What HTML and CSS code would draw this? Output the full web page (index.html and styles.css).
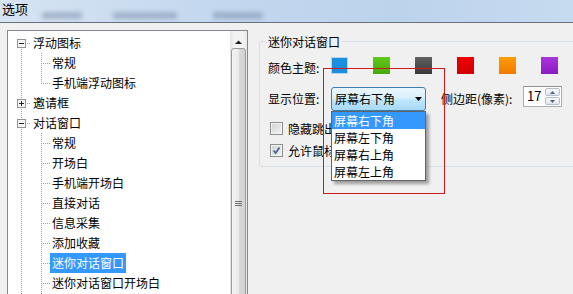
FILE: index.html
```html
<!DOCTYPE html>
<html lang="zh-CN">
<head>
<meta charset="utf-8">
<title>选项</title>
<link rel="stylesheet" href="styles.css">
</head>
<body>
<div class="window">
  <div class="titlebar">
    <span class="title">选项</span>
    <span class="blob b1"></span>
    <span class="blob b2"></span>
    <span class="blob b3"></span>
  </div>
  <div class="content">
    <div class="tree">
      <div class="nodes">
        <div class="node"><span class="c r-first"><svg class="exp" width="9" height="9" viewBox="0 0 9 9"><rect x="0.5" y="0.5" width="8" height="8" fill="#f6f6f6" stroke="#939393"/><path d="M2 4.5h5" stroke="#222"/></svg></span><span class="txt">浮动图标</span></div>
        <div class="node"><span class="c r-v"></span><span class="c c-t"></span><span class="txt">常规</span></div>
        <div class="node"><span class="c r-v"></span><span class="c c-l"></span><span class="txt">手机端浮动图标</span></div>
        <div class="node"><span class="c r-t"><svg class="exp" width="9" height="9" viewBox="0 0 9 9"><rect x="0.5" y="0.5" width="8" height="8" fill="#f6f6f6" stroke="#939393"/><path d="M2 4.5h5M4.5 2v5" stroke="#222"/></svg></span><span class="txt">邀请框</span></div>
        <div class="node"><span class="c r-t"><svg class="exp" width="9" height="9" viewBox="0 0 9 9"><rect x="0.5" y="0.5" width="8" height="8" fill="#f6f6f6" stroke="#939393"/><path d="M2 4.5h5" stroke="#222"/></svg></span><span class="txt">对话窗口</span></div>
        <div class="node"><span class="c r-v"></span><span class="c c-t"></span><span class="txt">常规</span></div>
        <div class="node"><span class="c r-v"></span><span class="c c-t"></span><span class="txt">开场白</span></div>
        <div class="node"><span class="c r-v"></span><span class="c c-t"></span><span class="txt">手机端开场白</span></div>
        <div class="node"><span class="c r-v"></span><span class="c c-t"></span><span class="txt">直接对话</span></div>
        <div class="node"><span class="c r-v"></span><span class="c c-t"></span><span class="txt">信息采集</span></div>
        <div class="node"><span class="c r-v"></span><span class="c c-t"></span><span class="txt">添加收藏</span></div>
        <div class="node"><span class="c r-v"></span><span class="c c-t"></span><span class="txt sel">迷你对话窗口</span></div>
        <div class="node"><span class="c r-v"></span><span class="c c-t"></span><span class="txt">迷你对话窗口开场白</span></div>
        <div class="node"><span class="c r-v"></span><span class="c c-t"></span></div>
      </div>
      <div class="scrollbar">
        <div class="sb-up"><svg width="7" height="4" viewBox="0 0 7 4"><path d="M0 4L3.5 0.5L7 4z" fill="#1e1e1e"/></svg></div>
        <div class="sb-thumb"><svg class="grip" width="7" height="6" viewBox="0 0 7 6"><path d="M0 0.5h7M0 2.5h7M0 4.5h7" stroke="#6e6e6e"/></svg></div>
      </div>
    </div>
    <div class="panel">
      <fieldset class="group">
        <legend>迷你对话窗口</legend>
        <div class="row colors">
          <span class="lbl">颜色主题:</span>
          <div class="swatches">
            <span class="sw sw-blue"></span>
            <span class="sw sw-green"></span>
            <span class="sw sw-grey"></span>
            <span class="sw sw-red"></span>
            <span class="sw sw-orange"></span>
            <span class="sw sw-purple"></span>
          </div>
        </div>
        <div class="row pos">
          <span class="lbl">显示位置:</span>
          <div class="combo">
            <span class="combo-val">屏幕右下角</span>
            <svg class="combo-arrow" width="7" height="4" viewBox="0 0 7 4"><path d="M0 0h7L3.5 4z" fill="#000"/></svg>
          </div>
          <span class="lbl2">侧边距(像素):</span>
          <div class="spin">
            <span class="spin-val">17</span>
            <div class="spin-btns">
              <span class="sbtn"><svg width="5" height="3" viewBox="0 0 5 3"><path d="M0 3L2.5 0L5 3z" fill="#4d6185"/></svg></span>
              <span class="sbtn"><svg width="5" height="3" viewBox="0 0 5 3"><path d="M0 0h5L2.5 3z" fill="#4d6185"/></svg></span>
            </div>
          </div>
        </div>
        <div class="checks">
          <label class="check"><span class="cb"></span><span class="check-txt">隐藏跳出</span></label>
          <label class="check"><span class="cb checked"><svg width="9" height="9" viewBox="0 0 9 9"><path d="M1.5 4.5L3.6 7L7.5 1.5" fill="none" stroke="#4a5e95" stroke-width="1.7"/></svg></span><span class="check-txt">允许鼠标</span></label>
        </div>
      </fieldset>
    </div>
  </div>
  <ul class="dropdown">
    <li class="hl">屏幕右下角</li>
    <li>屏幕左下角</li>
    <li>屏幕右上角</li>
    <li>屏幕左上角</li>
  </ul>
  <div class="annot"></div>
</div>
</body>
</html>
```

FILE: styles.css
```css
* { box-sizing: border-box; }

body {
  margin: 0;
  font-family: "Noto Sans CJK SC", "Microsoft YaHei", sans-serif;
  font-size: 12px;
  color: #000;
  background: #f0f0f0;
}

.window {
  position: relative;
  width: 573px;
  height: 294px;
  overflow: hidden;
  background: #f0f0f0;
  --v: repeating-linear-gradient(to bottom, #a0a0a0 0 1px, transparent 1px 2px);
  --h: repeating-linear-gradient(to right, #a0a0a0 0 1px, transparent 1px 2px);
}

/* title bar */
.titlebar {
  height: 23px;
  display: flex;
  align-items: flex-start;
  background: linear-gradient(to right, #d6e4f3 0%, #c4d8ee 35%, #bcd3ec 70%, #c7dbef 100%);
  border-bottom: 1px solid #66717e;
}
.title {
  font-size: 13px;
  line-height: 18px;
  padding-left: 2px;
  width: 28px;
}
.blob {
  height: 7px;
  margin-top: 12px;
  background: rgba(110, 130, 160, 0.45);
  filter: blur(2px);
  border-radius: 2px;
}
.b1 { width: 40px; margin-left: 14px; }
.b2 { width: 64px; margin-left: 31px; }
.b3 { width: 50px; margin-left: 36px; }

/* layout */
.content {
  display: flex;
  padding: 7px 0 0 7px;
}

/* tree */
.tree {
  flex: none;
  display: flex;
  width: 241px;
  height: 300px;
  border: 1px solid #828790;
  background: #fff;
}
.nodes {
  flex: 1;
  padding: 2px 0 0 3px;
}
.node {
  display: flex;
  height: 20px;
}
.c {
  flex: none;
  width: 20px;
  height: 20px;
  display: flex;
  align-items: flex-start;
  padding: 6px 0 0 6px;
  background-repeat: no-repeat;
}
.exp { display: block; }
.c-t, .c-l { width: 19px; }
.r-first {
  background-image: var(--v), var(--h);
  background-size: 1px 10px, 10px 1px;
  background-position: 10px 10px, 10px 10px;
}
.r-v {
  background-image: var(--v);
  background-size: 1px 20px;
  background-position: 10px 0;
}
.r-t {
  background-image: var(--v), var(--h);
  background-size: 1px 20px, 10px 1px;
  background-position: 10px 0, 10px 10px;
}
.c-t {
  background-image: var(--v), var(--h);
  background-size: 1px 20px, 9px 1px;
  background-position: 10px 0, 10px 10px;
}
.c-l {
  background-image: var(--v), var(--h);
  background-size: 1px 10px, 9px 1px;
  background-position: 10px 0, 10px 10px;
}
.txt {
  line-height: 20px;
  height: 20px;
  padding: 0 2px;
  white-space: nowrap;
}
.txt.sel {
  background: #3399ff;
  color: #fff;
}

/* scrollbar */
.scrollbar {
  flex: none;
  width: 17px;
  display: flex;
  flex-direction: column;
  background: linear-gradient(to right, #e4e4e4 0%, #f3f3f3 25%, #f3f3f3 75%, #e9e9e9 100%);
}
.sb-up {
  height: 17px;
  display: flex;
  justify-content: center;
  padding-top: 9px;
}
.sb-up svg { display: block; }
.sb-thumb {
  margin: 2px 1px 0 1px;
  height: 320px;
  border: 1px solid #9a9a9a;
  border-radius: 3px;
  background: linear-gradient(to right, #f4f4f4 0%, #eaeaea 50%, #d9d9d9 51%, #d2d2d2 100%);
  display: flex;
  justify-content: center;
  padding-top: 152px;
}
.grip { display: block; }

/* right panel */
.panel {
  padding: 3px 0 0 11px;
}
.group {
  margin: 0;
  width: 330px;
  min-width: 0;
  padding: 0 0 5px 8px;
  border: 1px solid #d5dfe5;
  border-radius: 3px;
}
.group legend {
  padding: 0 2px;
  margin-left: -2px;
  line-height: 17px;
}
.row { display: flex; }
.lbl {
  flex: none;
  width: 63px;
  white-space: nowrap;
}
.colors {
  margin-top: 7px;
  height: 17px;
  align-items: flex-start;
}
.colors .lbl {
  line-height: 17px;
  margin-top: 2px;
}
.swatches {
  display: flex;
  gap: 25px;
}
.sw {
  width: 17px;
  height: 17px;
}
.sw-blue { background: #1a8fe0; border: 1px solid #bcd4e8; }
.sw-green { background: linear-gradient(#62c91c, #45a809); }
.sw-grey { background: linear-gradient(#626262, #383838); }
.sw-red { background: linear-gradient(#ee0000, #d40000); }
.sw-orange { background: linear-gradient(#ff9d00, #f07a00); }
.sw-purple { background: linear-gradient(#ab35dc, #8a1cc2); }

.pos {
  margin-top: 12px;
  height: 25px;
  align-items: flex-start;
}
.pos .lbl { line-height: 25px; }
.combo {
  flex: none;
  width: 95px;
  height: 24px;
  margin-top: 1px;
  border: 1px solid #3c7fb1;
  border-radius: 3px;
  background: linear-gradient(to bottom, #eaf6fd 0%, #d9f0fc 45%, #bee6fd 55%, #a7d9f5 100%);
  display: flex;
  align-items: center;
  padding: 0 3px 0 3px;
}
.combo-val {
  flex: 1;
  line-height: 22px;
}
.combo-arrow { display: block; }
.lbl2 {
  flex: none;
  width: 82px;
  margin-left: 15px;
  line-height: 25px;
  white-space: nowrap;
}
.spin {
  flex: none;
  display: flex;
  width: 39px;
  height: 21px;
  border: 1px solid #abadb3;
  border-top-color: #8e8f8f;
  background: #fff;
}
.spin-val {
  flex: 1;
  font-size: 13px;
  line-height: 18px;
  padding-left: 3px;
}
.spin-btns {
  flex: none;
  width: 15px;
  display: flex;
  flex-direction: column;
  gap: 1px;
  margin: 1px 1px 1px 0;
}
.sbtn {
  flex: 1;
  border: 1px solid #b5bfca;
  border-radius: 2px;
  background: linear-gradient(#f7f8fa, #e3e8ee);
  display: flex;
  align-items: center;
  justify-content: center;
}
.sbtn svg { display: block; }

.checks {
  margin-top: 6px;
}
.check {
  display: flex;
  align-items: center;
  height: 22px;
  padding-left: 2px;
  white-space: nowrap;
}
.check-txt {
  display: block;
  width: 43px;
  overflow: hidden;
  white-space: nowrap;
}
.cb {
  flex: none;
  width: 13px;
  height: 13px;
  margin-right: 5px;
  border: 1px solid #8f8f8f;
  box-shadow: inset 0 0 0 1px #f4f4f4;
  background: linear-gradient(135deg, #cdd0d4, #f7f7f7);
  display: flex;
  align-items: center;
  justify-content: center;
}
.cb svg { display: block; }

/* open dropdown list (overlay) */
.dropdown {
  position: absolute;
  left: 331px;
  top: 111px;
  width: 95px;
  margin: 0;
  padding: 0;
  list-style: none;
  background: #fff;
  border: 1px solid #646464;
  box-shadow: 3px 3px 3px rgba(0, 0, 0, 0.35);
}
.dropdown li {
  height: 17px;
  line-height: 17px;
  padding-left: 2px;
  white-space: nowrap;
}
.dropdown li.hl {
  background: #3399ff;
  color: #fff;
}

/* red annotation rectangle */
.annot {
  position: absolute;
  left: 323px;
  top: 68px;
  width: 122px;
  height: 126px;
  border: 1px solid #cc1a1a;
}
```
